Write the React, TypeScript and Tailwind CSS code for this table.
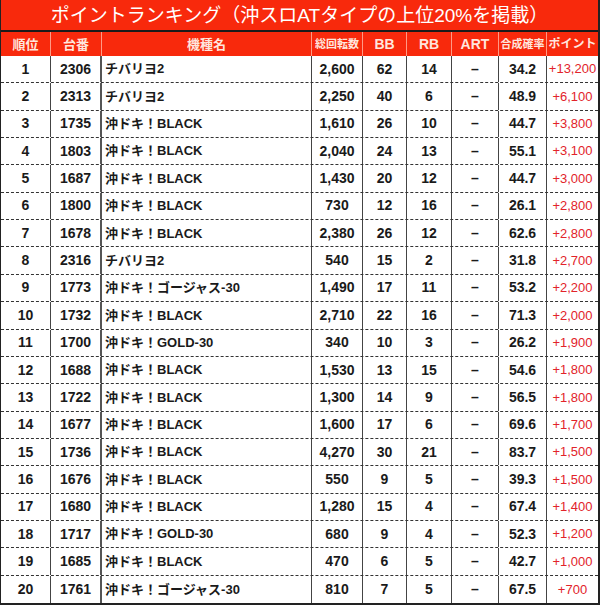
const rows: [number, string, string, string, number, number, string, string][] = [
  [1, "2306", "チバリヨ2", "2,600", 62, 14, "34.2", "+13,200"],
  [2, "2313", "チバリヨ2", "2,250", 40, 6, "48.9", "+6,100"],
  [3, "1735", "沖ドキ！BLACK", "1,610", 26, 10, "44.7", "+3,800"],
  [4, "1803", "沖ドキ！BLACK", "2,040", 24, 13, "55.1", "+3,100"],
  [5, "1687", "沖ドキ！BLACK", "1,430", 20, 12, "44.7", "+3,000"],
  [6, "1800", "沖ドキ！BLACK", "730", 12, 16, "26.1", "+2,800"],
  [7, "1678", "沖ドキ！BLACK", "2,380", 26, 12, "62.6", "+2,800"],
  [8, "2316", "チバリヨ2", "540", 15, 2, "31.8", "+2,700"],
  [9, "1773", "沖ドキ！ゴージャス-30", "1,490", 17, 11, "53.2", "+2,200"],
  [10, "1732", "沖ドキ！BLACK", "2,710", 22, 16, "71.3", "+2,000"],
  [11, "1700", "沖ドキ！GOLD-30", "340", 10, 3, "26.2", "+1,900"],
  [12, "1688", "沖ドキ！BLACK", "1,530", 13, 15, "54.6", "+1,800"],
  [13, "1722", "沖ドキ！BLACK", "1,300", 14, 9, "56.5", "+1,800"],
  [14, "1677", "沖ドキ！BLACK", "1,600", 17, 6, "69.6", "+1,700"],
  [15, "1736", "沖ドキ！BLACK", "4,270", 30, 21, "83.7", "+1,500"],
  [16, "1676", "沖ドキ！BLACK", "550", 9, 5, "39.3", "+1,500"],
  [17, "1680", "沖ドキ！BLACK", "1,280", 15, 4, "67.4", "+1,400"],
  [18, "1717", "沖ドキ！GOLD-30", "680", 9, 4, "52.3", "+1,200"],
  [19, "1685", "沖ドキ！BLACK", "470", 6, 5, "42.7", "+1,000"],
  [20, "1761", "沖ドキ！ゴージャス-30", "810", 7, 5, "67.5", "+700"],
]

const cols = "grid grid-cols-[50px_51px_210px_51px_44px_45px_47px_48px_51px]"

export default function App() {
  return (
    <div
      className="w-[600px] h-[605px] bg-white flex flex-col border-l border-r-2 border-b-2 border-[#222]"
      style={{ fontFamily: '"Liberation Sans", "Noto Sans CJK JP", sans-serif' }}
    >
      {/* title */}
      <div className="h-[32px] shrink-0 bg-[#f8290c] border-b-2 border-[#1a1a1a] flex items-center justify-center text-white text-[19px] leading-none">
        ポイントランキング（沖スロATタイプの上位20%を掲載）
      </div>

      {/* header */}
      <div className={`${cols} h-[24px] shrink-0 bg-[#f8290c] text-[#ffe6de] font-bold leading-none`}>
        <div className="flex items-center justify-center border-r border-[#ff9a85] text-[13px]">順位</div>
        <div className="flex items-center justify-center border-r border-[#ff9a85] text-[13px]">台番</div>
        <div className="flex items-center justify-center border-r border-[#ff9a85] text-[13px]">機種名</div>
        <div className="flex items-center justify-center border-r border-[#ff9a85] text-[11px]">総回転数</div>
        <div className="flex items-center justify-center border-r border-[#ff9a85] text-[14px]">BB</div>
        <div className="flex items-center justify-center border-r border-[#ff9a85] text-[14px]">RB</div>
        <div className="flex items-center justify-center border-r border-[#ff9a85] text-[14px]">ART</div>
        <div className="flex items-center justify-center border-r border-[#ff9a85] text-[11px]">合成確率</div>
        <div className="flex items-center justify-center text-[12px] whitespace-nowrap">ポイント</div>
      </div>

      {/* body */}
      <div className="flex-1 grid grid-rows-[repeat(20,1fr)] text-[14px] font-bold text-[#1a1a1a]">
        {rows.map(([rank, no, name, spins, bb, rb, rate, pt], i) => (
          <div
            key={rank}
            className={`${cols} ${i < rows.length - 1 ? "border-b border-dashed border-[#333]" : ""}`}
          >
            <div className="flex items-center justify-center border-r border-[#444]">{rank}</div>
            <div className="flex items-center justify-center border-r-2 border-[#555]">{no}</div>
            <div className="flex items-center pl-[3px] border-r border-[#444] whitespace-nowrap text-[13px]">{name}</div>
            <div className="flex items-center justify-center border-r border-[#444]">{spins}</div>
            <div className="flex items-center justify-center border-r border-[#444]">{bb}</div>
            <div className="flex items-center justify-center border-r border-[#444]">{rb}</div>
            <div className="flex items-center justify-center border-r border-[#444]">–</div>
            <div className="flex items-center justify-center border-r border-[#444]">{rate}</div>
            <div className="flex items-center justify-center text-[13px] text-[#e2232a] font-normal whitespace-nowrap">
              {pt}
            </div>
          </div>
        ))}
      </div>
    </div>
  )
}
